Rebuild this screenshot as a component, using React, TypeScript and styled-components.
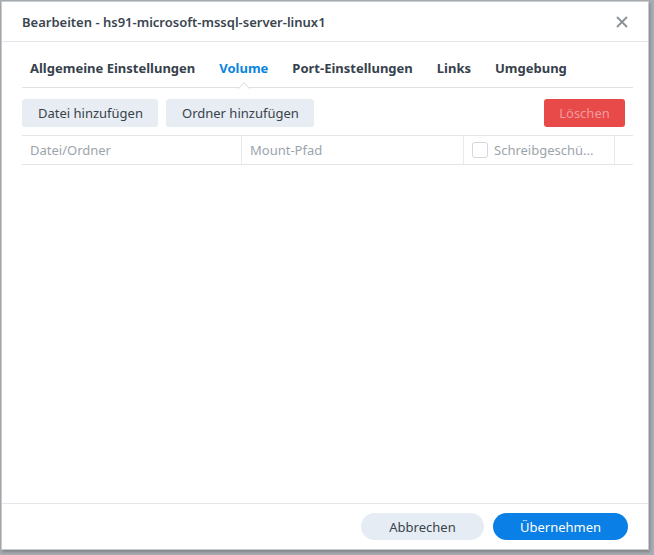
import styled, { createGlobalStyle } from 'styled-components'

const GlobalStyle = createGlobalStyle`
  html, body {
    margin: 0;
    padding: 0;
    background: #a9adb1;
    font-family: "Noto Sans", "Open Sans", sans-serif;
  }
`

const Page = styled.div`
  width: 654px;
  height: 555px;
  padding: 1px 5px 5px 1px;
  box-sizing: border-box;
`

const Dialog = styled.div`
  width: 648px;
  height: 549px;
  background: #fff;
  border: 1px solid #c9ccd0;
  box-sizing: border-box;
  display: flex;
  flex-direction: column;
  box-shadow: 1px 2px 3px rgba(0, 0, 0, 0.25);
`

const Header = styled.div`
  height: 39px;
  display: flex;
  align-items: center;
  justify-content: space-between;
  padding: 0 19px 0 20px;
  border-bottom: 1px solid #e4e7ea;
`

const Title = styled.div`
  font-size: 13px;
  font-weight: 600;
  color: #3a4550;
`

const Close = styled.button`
  border: 0;
  background: none;
  padding: 0;
  width: 14px;
  height: 14px;
  display: flex;
  cursor: pointer;
`

const Body = styled.div`
  flex: 1;
  padding: 0 15px 0 20px;
  display: flex;
  flex-direction: column;
`

const Tabs = styled.div`
  height: 45px;
  display: flex;
  align-items: center;
  gap: 24px;
  padding: 0 0 0 8px;
  border-bottom: 1px solid #dde1e5;
`

const Tab = styled.div<{ $active?: boolean }>`
  position: relative;
  font-size: 13px;
  font-weight: 700;
  color: ${p => (p.$active ? '#0a84e0' : '#36414c')};
  padding-top: 7px;

  ${p =>
    p.$active &&
    `
    &::after {
      content: '';
      position: absolute;
      left: 50%;
      bottom: -16px;
      width: 8px;
      height: 8px;
      background: #fff;
      border-left: 1px solid #dde1e5;
      border-top: 1px solid #dde1e5;
      transform: translateX(-50%) rotate(45deg);
    }
  `}
`

const Toolbar = styled.div`
  display: flex;
  align-items: center;
  gap: 8px;
  margin-top: 11px;
  padding-right: 8px;
`

const ToolButton = styled.button`
  height: 28px;
  padding: 0 15px 0 16px;
  border: 0;
  border-radius: 3px;
  background: #e8edf3;
  color: #37424d;
  font: 13px "Noto Sans", "Open Sans", sans-serif;
`

const DangerButton = styled(ToolButton)`
  margin-left: auto;
  width: 81px;
  padding: 0;
  background: #e84a4a;
  color: #f19b9b;
`

const Table = styled.div`
  margin-top: 8px;
  display: grid;
  grid-template-columns: 220px 222px 151px 1fr;
  border-top: 1px solid #e3e6e9;
  border-bottom: 1px solid #e3e6e9;
  height: 28px;
`

const HeadCell = styled.div<{ $last?: boolean }>`
  display: flex;
  align-items: center;
  gap: 6px;
  padding-left: 8px;
  font-size: 13px;
  color: #9ca4ab;
  border-right: ${p => (p.$last ? '0' : '1px solid #e8eaed')};
  white-space: nowrap;
  overflow: hidden;
`

const Check = styled.span`
  width: 16px;
  height: 16px;
  border: 1px solid #d5d9dd;
  border-radius: 3px;
  box-sizing: border-box;
  flex: none;
`

const Footer = styled.div`
  height: 45px;
  border-top: 1px solid #e4e7ea;
  display: flex;
  align-items: center;
  justify-content: flex-end;
  gap: 9px;
  padding: 0 20px 0 0;
`

const PillButton = styled.button<{ $primary?: boolean }>`
  height: 27px;
  border: 0;
  border-radius: 14px;
  padding: 0;
  font: 13px "Noto Sans", "Open Sans", sans-serif;
  background: ${p => (p.$primary ? '#0a80e6' : '#e6ecf3')};
  color: ${p => (p.$primary ? '#fff' : '#38434e')};
  width: ${p => (p.$primary ? '135px' : '123px')};
`

export default function App() {
  return (
    <>
      <GlobalStyle />
      <Page>
        <Dialog>
          <Header>
            <Title>Bearbeiten - hs91-microsoft-mssql-server-linux1</Title>
            <Close aria-label="close">
              <svg width="14" height="14" viewBox="0 0 14 14">
                <path d="M2.5 2.5 L11.5 11.5 M11.5 2.5 L2.5 11.5" stroke="#8a9096" strokeWidth="1.8" strokeLinecap="round" />
              </svg>
            </Close>
          </Header>
          <Body>
            <Tabs>
              <Tab>Allgemeine Einstellungen</Tab>
              <Tab $active>Volume</Tab>
              <Tab>Port-Einstellungen</Tab>
              <Tab>Links</Tab>
              <Tab>Umgebung</Tab>
            </Tabs>
            <Toolbar>
              <ToolButton>Datei hinzufügen</ToolButton>
              <ToolButton>Ordner hinzufügen</ToolButton>
              <DangerButton disabled>Löschen</DangerButton>
            </Toolbar>
            <Table>
              <HeadCell>Datei/Ordner</HeadCell>
              <HeadCell>Mount-Pfad</HeadCell>
              <HeadCell>
                <Check />
                Schreibgeschü...
              </HeadCell>
              <HeadCell $last />
            </Table>
          </Body>
          <Footer>
            <PillButton>Abbrechen</PillButton>
            <PillButton $primary>Übernehmen</PillButton>
          </Footer>
        </Dialog>
      </Page>
    </>
  )
}
